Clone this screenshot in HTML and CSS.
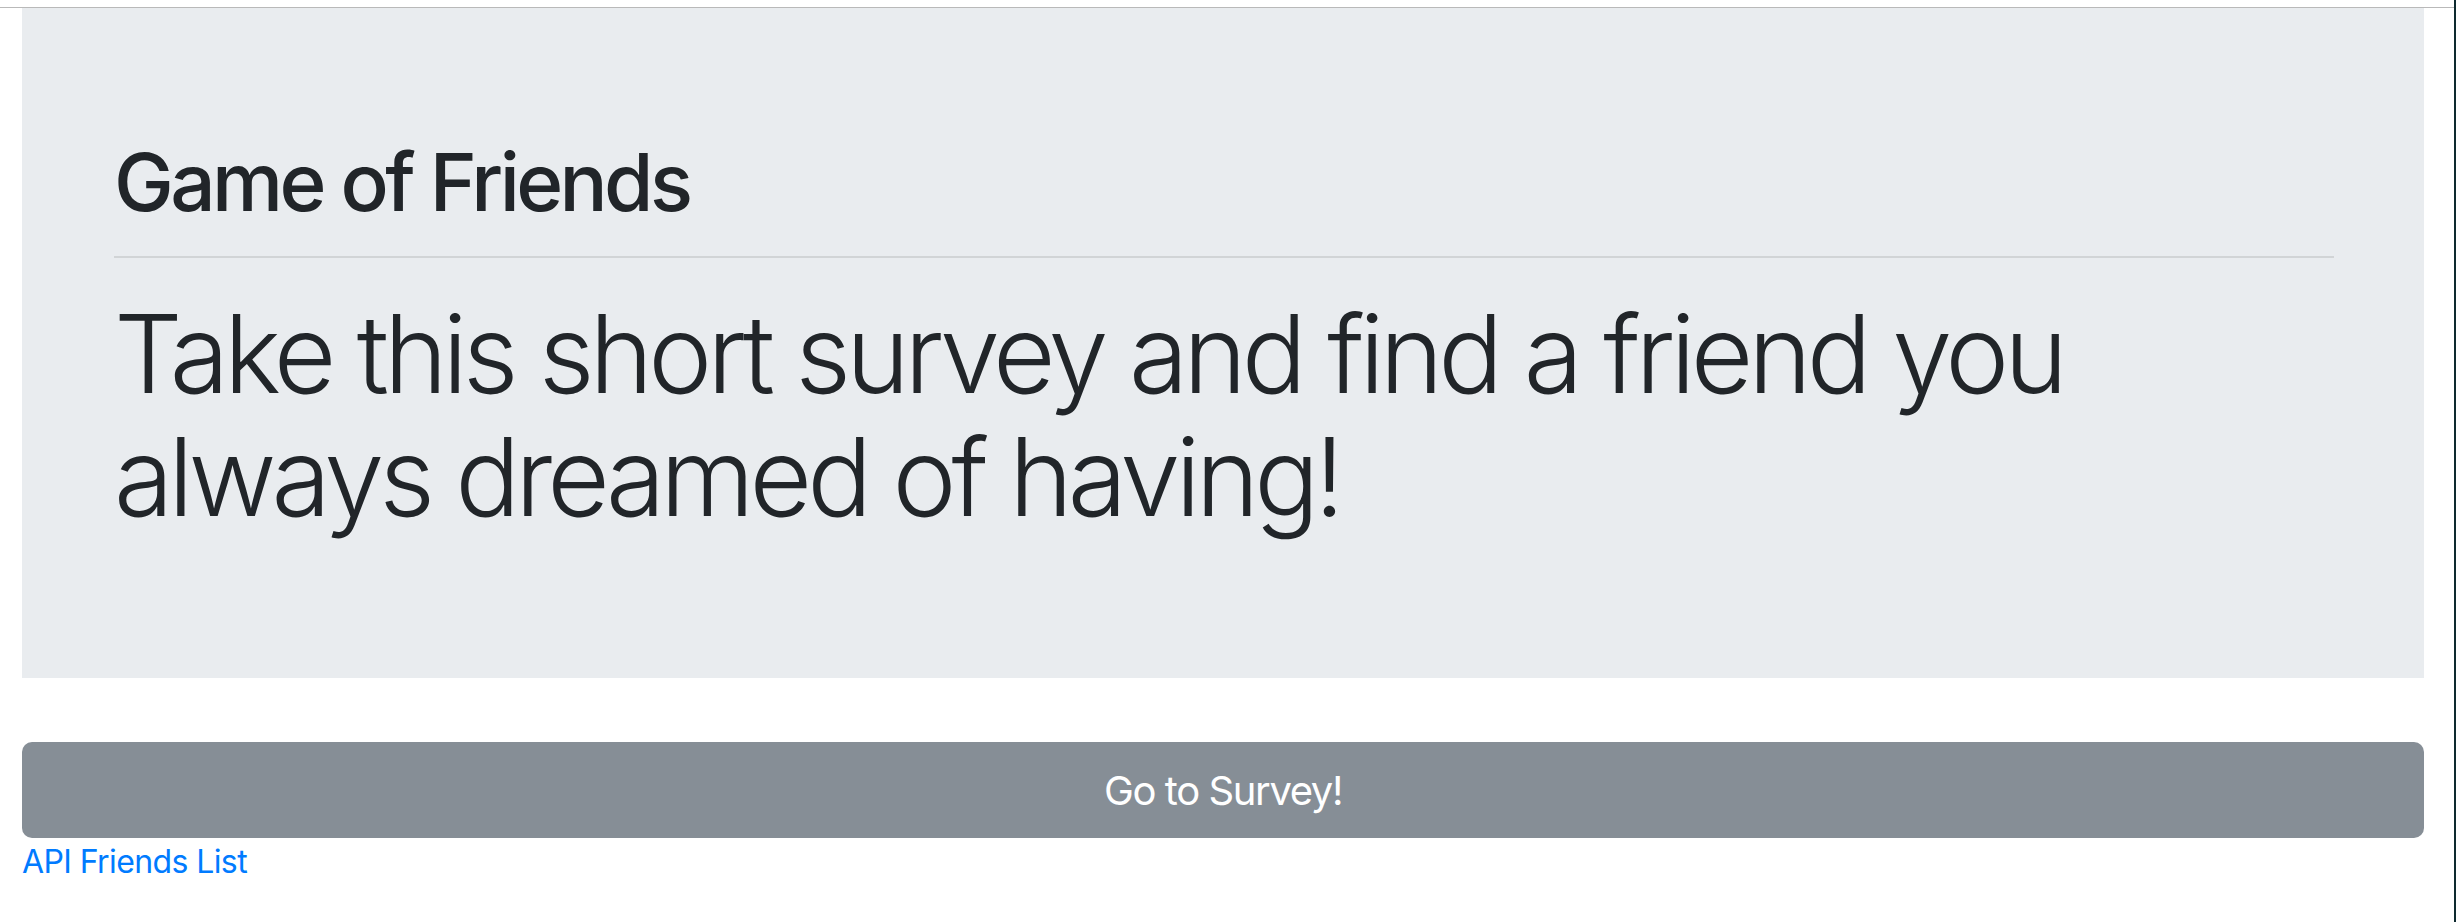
FILE: index.html
```html
<!DOCTYPE html>
<html lang="en">
<head>
<meta charset="utf-8">
<title>Game of Friends</title>
<link rel="stylesheet" href="styles.css">
</head>
<body>
<div class="window">
  <div class="page">
    <div class="topbar"></div>
    <main class="content">
      <section class="jumbotron">
        <h1 class="title">Game of Friends</h1>
        <hr class="divider">
        <p class="lead">Take this short survey and find a friend you always dreamed of having!</p>
      </section>
      <a class="btn-survey" href="#">Go to Survey!</a>
      <a class="api-link" href="#">API Friends List</a>
    </main>
  </div>
  <div class="edge"></div>
</div>
</body>
</html>
```

FILE: styles.css
```css
* { box-sizing: border-box; }
html, body {
  margin: 0;
  padding: 0;
  background: #ffffff;
  width: 2456px;
  height: 922px;
  overflow: hidden;
}
body {
  font-family: Inter, "Noto Sans", "Liberation Sans", sans-serif;
  color: #212529;
}
.window {
  display: flex;
  width: 2456px;
  height: 922px;
}
.page {
  flex: 1;
  display: flex;
  flex-direction: column;
}
.topbar {
  height: 8px;
  border-bottom: 1px solid #b9b9b9;
}
.edge {
  width: 2px;
  background: #0e2a2f;
}
.content {
  display: flex;
  flex-direction: column;
  padding: 0 30px 0 22px;
}
.jumbotron {
  background: #e9ecef;
  padding: 130px 90px 142px 92px;
  height: 670px;
}
.title {
  margin: 0;
  font-size: 80px;
  font-weight: 500;
  line-height: 88px;
  letter-spacing: -3.6px;
}
.divider {
  margin: 30px 0 34px;
  border: 0;
  border-top: 2px solid rgba(0, 0, 0, 0.1);
  height: 0;
}
.lead {
  margin: 0;
  font-size: 108px;
  font-weight: 300;
  line-height: 123px;
  letter-spacing: -5px;
}
.btn-survey {
  margin-top: 64px;
  height: 96px;
  display: flex;
  align-items: center;
  justify-content: center;
  background: #868e96;
  color: #ffffff;
  border-radius: 10px;
  font-size: 40px;
  font-weight: 400;
  letter-spacing: -1.4px;
  text-decoration: none;
}
.api-link {
  align-self: flex-start;
  color: #007bff;
  font-size: 32px;
  line-height: 48px;
  letter-spacing: -0.6px;
  text-decoration: none;
}
```
